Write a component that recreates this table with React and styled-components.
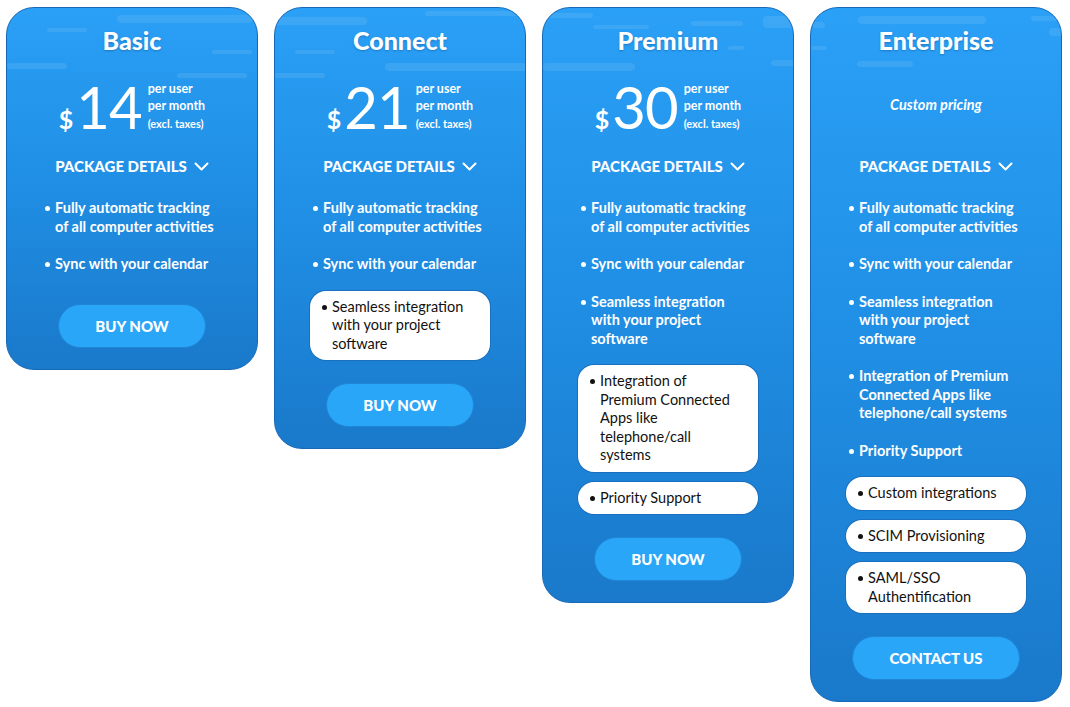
import React from "react";
import styled, { createGlobalStyle } from "styled-components";

const GlobalStyle = createGlobalStyle`
  body {
    margin: 0;
    background: #ffffff;
    font-family: "Lato", "Noto Sans", sans-serif;
  }
`;

const plans = [
  {
    name: "Basic",
    price: "14",
    action: "BUY NOW",
    streaks: [
      { l: 110, t: 7, w: 136, h: 8 },
      { l: 40, t: 20, w: 40, h: 4 },
      { l: 0, t: 55, w: 60, h: 6 },
      { l: 170, t: 65, w: 70, h: 5 },
      { l: 205, t: 42, w: 40, h: 4 },
    ],
    features: [
      { text: "Fully automatic tracking of all computer activities" },
      { text: "Sync with your calendar" },
    ],
  },
  {
    name: "Connect",
    price: "21",
    action: "BUY NOW",
    streaks: [
      { l: 0, t: 9, w: 92, h: 8 },
      { l: 150, t: 3, w: 100, h: 5 },
      { l: 20, t: 42, w: 40, h: 4 },
      { l: 110, t: 55, w: 142, h: 8 },
      { l: 0, t: 65, w: 50, h: 5 },
    ],
    features: [
      { text: "Fully automatic tracking of all computer activities" },
      { text: "Sync with your calendar" },
      { text: "Seamless integration with your project software", hi: true },
    ],
  },
  {
    name: "Premium",
    price: "30",
    action: "BUY NOW",
    streaks: [
      { l: 0, t: 5, w: 50, h: 5 },
      { l: 148, t: 13, w: 52, h: 5 },
      { l: 50, t: 17, w: 56, h: 4 },
      { l: 0, t: 55, w: 92, h: 8 },
      { l: 185, t: 38, w: 16, h: 4 },
      { l: 228, t: 52, w: 24, h: 6 },
      { l: 220, t: 8, w: 32, h: 12 },
    ],
    features: [
      { text: "Fully automatic tracking of all computer activities" },
      { text: "Sync with your calendar" },
      { text: "Seamless integration with your project software" },
      {
        text: "Integration of Premium Connected Apps like telephone/call systems",
        hi: true,
      },
      { text: "Priority Support", hi: true },
    ],
  },
  {
    name: "Enterprise",
    custom: "Custom pricing",
    action: "CONTACT US",
    streaks: [
      { l: 47, t: 8, w: 128, h: 8 },
      { l: 0, t: 14, w: 14, h: 6 },
      { l: 0, t: 38, w: 16, h: 4 },
      { l: 46, t: 53, w: 56, h: 6 },
      { l: 220, t: 8, w: 32, h: 5 },
      { l: 238, t: 20, w: 14, h: 8 },
    ],
    features: [
      { text: "Fully automatic tracking of all computer activities" },
      { text: "Sync with your calendar" },
      { text: "Seamless integration with your project software" },
      {
        text: "Integration of Premium Connected Apps like telephone/call systems",
      },
      { text: "Priority Support" },
      { text: "Custom integrations", hi: true },
      { text: "SCIM Provisioning", hi: true },
      { text: "SAML/SSO Authentification", hi: true },
    ],
  },
];

const Chevron = () => (
  <svg width="15" height="9" viewBox="0 0 15 9" fill="none">
    <path
      d="M1.5 1.5L7.5 7.5L13.5 1.5"
      stroke="#ffffff"
      strokeWidth="2"
      strokeLinecap="round"
      strokeLinejoin="round"
    />
  </svg>
);

const App = () => {
  return (
    <>
      <GlobalStyle />
      <Board>
        {plans.map((plan) => (
          <Card key={plan.name}>
            {plan.streaks.map((s, i) => (
              <Streak
                key={i}
                style={{ left: s.l, top: s.t, width: s.w, height: s.h }}
              />
            ))}
            <Title>{plan.name}</Title>
            <PriceArea>
              {plan.custom ? (
                <Custom>{plan.custom}</Custom>
              ) : (
                <>
                  <Amount>
                    <Dollar>$</Dollar>
                    <Number>{plan.price}</Number>
                  </Amount>
                  <PerBlock>
                    <span>per user</span>
                    <span>per month</span>
                    <Small>(excl. taxes)</Small>
                  </PerBlock>
                </>
              )}
            </PriceArea>
            <Details>
              PACKAGE DETAILS <Chevron />
            </Details>
            <Features>
              {plan.features.map((f) => (
                <Feature key={f.text} $hi={f.hi}>
                  <Bullet $hi={f.hi} />
                  <span>{f.text}</span>
                </Feature>
              ))}
            </Features>
            <Action>{plan.action}</Action>
          </Card>
        ))}
      </Board>
    </>
  );
};

const Board = styled.div`
  display: flex;
  align-items: flex-start;
  gap: 16px;
  padding: 7px 6px;
`;

const Card = styled.div`
  position: relative;
  overflow: hidden;
  width: 252px;
  box-sizing: border-box;
  padding: 17px 0 21px;
  display: flex;
  flex-direction: column;
  align-items: center;
  border: 1px solid #1769b8;
  border-radius: 28px;
  background: linear-gradient(180deg, #2aa0f6 0%, #2090e6 45%, #1a79ca 100%);
  color: #ffffff;
`;

const Streak = styled.div`
  position: absolute;
  border-radius: 4px;
  background: rgba(255, 255, 255, 0.09);
`;

const Title = styled.h2`
  position: relative;
  margin: 0;
  font-size: 25px;
  line-height: 30px;
  font-weight: 900;
  text-shadow: 0 1px 2px rgba(0, 40, 90, 0.3);
`;

const PriceArea = styled.div`
  position: relative;
  margin-top: 22px;
  height: 60px;
  display: flex;
  align-items: center;
  justify-content: center;
  gap: 6px;
`;

const Amount = styled.div`
  display: flex;
  align-items: baseline;
  gap: 3px;
`;

const Dollar = styled.span`
  font-size: 25px;
  font-weight: 700;
`;

const Number = styled.span`
  font-size: 58px;
  line-height: 60px;
  font-weight: 400;
  letter-spacing: -1px;
`;

const PerBlock = styled.div`
  display: flex;
  flex-direction: column;
  font-size: 12.5px;
  line-height: 17.5px;
  font-weight: 700;
  padding-bottom: 2px;
`;

const Small = styled.span`
  font-size: 11px;
`;

const Custom = styled.div`
  font-size: 14.5px;
  font-style: italic;
  font-weight: 700;
  padding-bottom: 6px;
`;

const Details = styled.div`
  margin-top: 20px;
  display: flex;
  align-items: center;
  gap: 7px;
  font-size: 15px;
  line-height: 18px;
  font-weight: 900;
`;

const Features = styled.ul`
  list-style: none;
  margin: 17px 0 0;
  padding: 0;
  width: 180px;
  display: flex;
  flex-direction: column;
  gap: 5px;
`;

const Feature = styled.li`
  display: flex;
  align-items: flex-start;
  gap: 5px;
  padding: ${(p) => (p.$hi ? "7px 20px 7px 12px" : "7px 3px")};
  margin-top: ${(p) => (p.$hi ? "5px" : "0")};
  border-radius: 16px;
  background: ${(p) => (p.$hi ? "#ffffff" : "transparent")};
  color: ${(p) => (p.$hi ? "#111111" : "#ffffff")};
  font-size: 14.5px;
  line-height: 18.5px;
  font-weight: ${(p) => (p.$hi ? 400 : 700)};
  box-shadow: ${(p) => (p.$hi ? "0 0 0 1px #1a6fbf" : "none")};
`;

const Bullet = styled.i`
  flex: none;
  width: 5px;
  height: 5px;
  margin-top: 7px;
  border-radius: 50%;
  background: ${(p) => (p.$hi ? "#111111" : "#ffffff")};
`;

const Action = styled.button`
  position: relative;
  margin-top: 23px;
  height: 44px;
  padding: 0 36px;
  min-width: 144px;
  border: 1px solid #1f86d8;
  border-radius: 22px;
  background: #2aa6f8;
  color: #ffffff;
  font-family: "Lato", "Noto Sans", sans-serif;
  font-size: 15px;
  font-weight: 900;
  cursor: pointer;
`;

export default App;
